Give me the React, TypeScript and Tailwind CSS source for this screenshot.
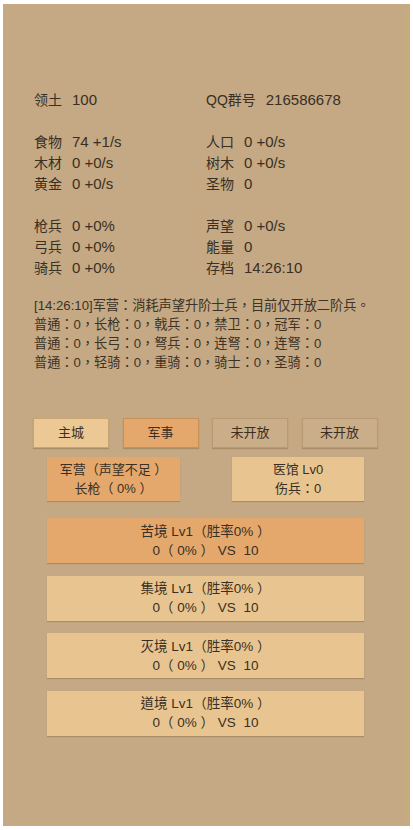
const font = '[font-family:"Liberation_Sans","Noto_Sans_CJK_TC",sans-serif]';

const stats: [string, string, string, string][][] = [
  [['领土', '100', 'QQ群号', '216586678']],
  [
    ['食物', '74 +1/s', '人口', '0 +0/s'],
    ['木材', '0 +0/s', '树木', '0 +0/s'],
    ['黄金', '0 +0/s', '圣物', '0'],
  ],
  [
    ['枪兵', '0 +0%', '声望', '0 +0/s'],
    ['弓兵', '0 +0%', '能量', '0'],
    ['骑兵', '0 +0%', '存档', '14:26:10'],
  ],
];

const logLines = [
  '[14:26:10]军营：消耗声望升阶士兵，目前仅开放二阶兵。',
  '普通：0，长枪：0，戟兵：0，禁卫：0，冠军：0',
  '普通：0，长弓：0，弩兵：0，连弩：0，连弩：0',
  '普通：0，轻骑：0，重骑：0，骑士：0，圣骑：0',
];

const tabs = [
  { label: '主城', cls: 'bg-[#ecc994] border-[#c9a571]' },
  { label: '军事', cls: 'bg-[#e4a86c] border-[#c79059]' },
  { label: '未开放', cls: 'bg-[#c9ae89] border-[#b89b74]' },
  { label: '未开放', cls: 'bg-[#c9ae89] border-[#b89b74]' },
];

const battles = ['苦境', '集境', '灭境', '道境'];

function Stat({ label, value }: { label: string; value: string }) {
  return (
    <div className="flex h-[21px] items-center">
      <span className="text-[14px]">{label}</span>
      <span className="ml-[10px] text-[15px]">{value}</span>
    </div>
  );
}

export default function App() {
  return (
    <div className={`w-[413px] h-[830px] bg-white pt-[4px] pl-[3px] ${font}`}>
      <div className="w-[407px] h-[822px] bg-[#c4a984] text-[#3a2f22] pt-[86px] relative">
        <div className="border-r-[5px] border-[#c8aa7f] absolute right-0 top-0 h-full" />
        <div className="pl-[31px] flex flex-col gap-[21px]">
          {stats.map((group, gi) => (
            <div key={gi} className="flex flex-col">
              {group.map((r, ri) => (
                <div key={ri} className="grid grid-cols-[172px_1fr]">
                  <Stat label={r[0]} value={r[1]} />
                  <Stat label={r[2]} value={r[3]} />
                </div>
              ))}
            </div>
          ))}
        </div>

        <div className="pl-[31px] mt-[17px] text-[13.2px] leading-[19px] text-[#3d3226]">
          {logLines.map((l, i) => (
            <div key={i} className="whitespace-nowrap">{l}</div>
          ))}
        </div>

        <div className="mt-[46px] pl-[30px] flex gap-[13.5px]">
          {tabs.map((t, i) => (
            <div
              key={i}
              className={`w-[76px] h-[30px] flex items-center justify-center text-[13px] border ${t.cls} shadow-[0_1px_1px_rgba(120,90,50,0.35)]`}
            >
              {t.label}
            </div>
          ))}
        </div>

        <div className="mt-[9px] pl-[44px] flex gap-[52px] text-[13px] leading-[19px]">
          <div className="w-[133px] h-[44px] bg-[#e4a86c] flex flex-col items-center justify-center shadow-[0_1px_1px_rgba(120,90,50,0.35)]">
            <div className="whitespace-pre">军营（声望不足 ）</div>
            <div className="whitespace-pre">长枪（ 0% ）</div>
          </div>
          <div className="w-[132px] h-[44px] bg-[#e8c590] flex flex-col items-center justify-center shadow-[0_1px_1px_rgba(120,90,50,0.35)]">
            <div>医馆 Lv0</div>
            <div>伤兵：0</div>
          </div>
        </div>

        <div className="mt-[17px] pl-[44px] flex flex-col gap-[12.5px] text-[13.5px] leading-[19px]">
          {battles.map((b, i) => (
            <div
              key={b}
              className={`w-[317px] h-[45px] flex flex-col items-center justify-center shadow-[0_1px_1px_rgba(120,90,50,0.35)] ${
                i === 0 ? 'bg-[#e4a86c]' : 'bg-[#e8c590]'
              }`}
            >
              <div className="whitespace-pre">{b} Lv1（胜率0% ）</div>
              <div className="whitespace-pre">0（ 0% ） VS  10</div>
            </div>
          ))}
        </div>
      </div>
    </div>
  );
}
